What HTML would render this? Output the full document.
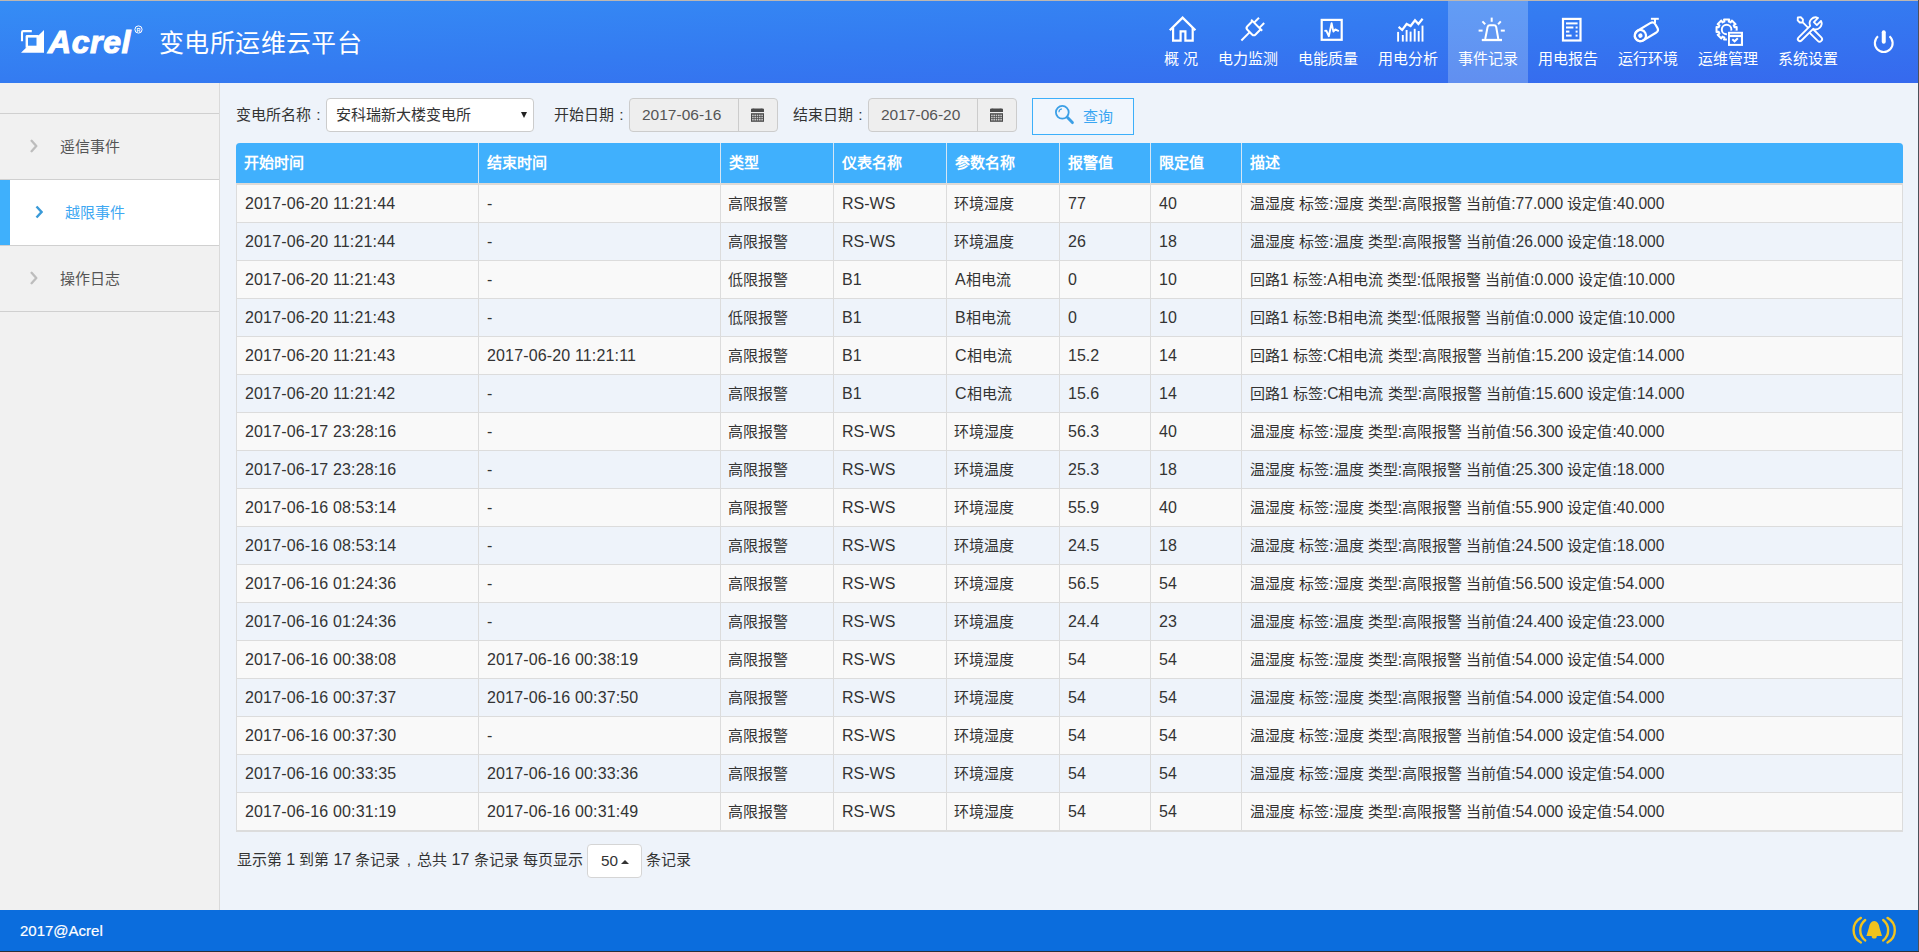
<!DOCTYPE html>
<html lang="zh-CN"><head><meta charset="utf-8">
<style>
*{box-sizing:border-box;margin:0;padding:0}
html,body{width:1919px;height:952px;overflow:hidden;background:#eef3fa;font-family:"Liberation Sans",sans-serif;color:#333;position:relative}
.edge-top{position:absolute;left:0;top:0;width:1919px;height:1px;background:#bdb7b1;z-index:5}
.edge-right{position:absolute;left:1918px;top:0;width:1px;height:952px;background:#4b5058;z-index:5}
.edge-bot{position:absolute;left:0;top:951px;width:1919px;height:1px;background:#2a3038;z-index:5}
#hdr{position:absolute;left:0;top:0;width:1919px;height:83px;background:linear-gradient(to bottom right,#358df5,#347bf1 50%,#3669ee);overflow:hidden}
#acrel{position:absolute;left:48px;top:23px;font:italic bold 32px/38px "Liberation Sans",sans-serif;color:#fff;-webkit-text-stroke:1.1px #fff;letter-spacing:0.6px}
#title{position:absolute;left:159px;top:27px;font-size:25px;letter-spacing:0.4px;color:#fff;line-height:32px}
.ni{position:absolute;top:1px;height:82px;color:#fff;font-size:15px;text-align:center}
.ni span{position:absolute;left:0;right:0;top:48.5px;line-height:18px;white-space:nowrap}
.ni.act{background:linear-gradient(#629df5,#618ff0)}
#side{position:absolute;left:0;top:83px;width:220px;height:827px;background:#f1f1f1;border-right:1px solid #dadada}
.si{position:absolute;left:0;width:219px;height:67px;border-top:1px solid #d0d0d0;border-bottom:1px solid #d0d0d0;font-size:15px;color:#555}
.si .chev{position:absolute;left:30px;top:25px}
.si .t{position:absolute;left:60px;top:23px;line-height:20px}
.si.act{background:#fff;color:#40a8f2}
.si.act .bar{position:absolute;left:0;top:0;width:10px;height:65px;background:#3fb0fc}
.si.act .chev{left:35px}
.si.act .t{left:65px}
.col{display:inline-block;width:15px;text-align:center;font-style:normal;font-size:15.5px}
.lbl{position:absolute;top:105px;font-size:15px;line-height:20px;color:#333}
.sel{position:absolute;left:326px;top:98px;width:208px;height:34px;background:#fff;border:1px solid #ccc;border-radius:4px;font-size:15px}
.sel span{position:absolute;left:9px;top:6px;line-height:20px}
.tri{position:absolute;left:194px;top:13px;width:0;height:0;border-left:3px solid transparent;border-right:3px solid transparent;border-top:6px solid #222}
.dinp{position:absolute;top:98px;width:149px;height:34px;background:#eee;border:1px solid #ccc;border-radius:4px;font-size:15px;color:#555}
.dinp span{position:absolute;left:12px;top:6px;line-height:20px}
.dinp .add{position:absolute;right:0;top:-1px;width:39px;height:34px;border-left:1px solid #ccc}
.btn{position:absolute;left:1032px;top:98px;width:102px;height:37px;border:1.5px solid #3caffa;background:#f1f6fd;color:#3aa6f2;font-size:15px}
.btn span{position:absolute;left:50px;top:8px;line-height:20px}
#tbl{position:absolute;left:236px;top:143px;width:1667px;height:689px;background:#eef3fa;border:1px solid #dcdcdc;border-top:none;border-radius:4px 4px 0 0}
.th{position:absolute;left:-1px;top:0;width:1667px;height:42px;background:#40b0fd;border-radius:4px 4px 0 0;border-bottom:2px solid #dedad6}
.th .c{position:absolute;top:0;height:40px;line-height:40px;padding-left:8px;color:#fff;font-weight:bold;font-size:15px;border-left:1px solid #d5e6f5}
.th .c:first-child{border-left:none}
.tr{position:absolute;left:-1px;width:1666px;height:38px;border-bottom:1px solid #dcdcdc}
.tr.odd{background:#f9f9f9}
.tr .c .L{font-size:16px}
.tr .c.dt .L{letter-spacing:0.15px}
.tr .c.ds .L{font-size:15.6px}
.tr .c{position:absolute;top:0;height:37px;line-height:37px;padding-left:7px;font-size:15px;color:#333;border-left:1px solid #dcdcdc;white-space:nowrap}
#pg{position:absolute;left:237px;top:844px;height:34px;font-size:15px;color:#333}
.L{font-size:15.5px}
#pg .L{font-size:16px}
#pg .psel .L{font-size:15.3px}
.ptxt{position:absolute;left:0;top:6px;line-height:20px;white-space:nowrap}
.psel{position:absolute;left:350px;top:0;width:55px;height:34px;background:#fff;border:1px solid #d5d5d5;border-radius:4px}
.psel span{position:absolute;left:13px;top:5.8px;line-height:20px}
.tri2{position:absolute;left:33px;top:15px;width:0;height:0;border-left:4px solid transparent;border-right:4px solid transparent;border-bottom:4px solid #333}
.ptxt2{position:absolute;left:409px;top:6px;line-height:20px;white-space:nowrap}
#ft{position:absolute;left:0;top:910px;width:1919px;height:42px;background:#0b6ddd;color:#fff;font-size:14px}
#ft .c{position:absolute;left:20px;top:11.5px;line-height:18px;font-size:15px;-webkit-text-stroke:0.2px #fff}
</style></head>
<body>
<div id="hdr">

<svg width="26" height="26" viewBox="0 0 26 26" style="position:absolute;left:20px;top:29px">
 <path d="M2,12.2 L2,3.4 Q2,2.1 3.3,2.1 L11.8,2.1" fill="none" stroke="#fff" stroke-width="2.1"/>
 <path d="M1,23.8 L24,1.1 L24,23.8 Z" fill="#fff"/>
 <path d="M5.6,18.8 L5.6,7.4 Q5.6,6 7,6 L18.6,6 L18.6,18.8 Z" fill="#fff"/>
 <rect x="8" y="8.6" width="8.5" height="8.1" fill="#3589f3"/>
</svg>

<div id="acrel">Acrel</div>
<svg width="10" height="10" viewBox="0 0 10 10" style="position:absolute;left:134px;top:25px"><circle cx="4.5" cy="4.5" r="3.6" fill="none" stroke="#fff" stroke-width="1"/><text x="4.5" y="6.6" font-size="5.5" font-family="Liberation Sans" fill="#fff" text-anchor="middle" font-weight="bold">R</text></svg>
<div id="title">变电所运维云平台</div>
<div class="ni" style="left:1154px;width:54px"><span>概&nbsp;况</span></div>
<div class="ni" style="left:1208px;width:80px"><span>电力监测</span></div>
<div class="ni" style="left:1288px;width:80px"><span>电能质量</span></div>
<div class="ni" style="left:1368px;width:80px"><span>用电分析</span></div>
<div class="ni act" style="left:1448px;width:80px"><span>事件记录</span></div>
<div class="ni" style="left:1528px;width:80px"><span>用电报告</span></div>
<div class="ni" style="left:1608px;width:80px"><span>运行环境</span></div>
<div class="ni" style="left:1688px;width:80px"><span>运维管理</span></div>
<div class="ni" style="left:1768px;width:80px"><span>系统设置</span></div>


<svg id="icons" width="1919" height="83" viewBox="0 0 1919 83" style="position:absolute;left:0;top:0" fill="none" stroke="#fff" stroke-width="2.1">
 <!-- house -->
 <polyline points="1169.8,30.3 1182.6,17.6 1195.4,30.3" stroke-width="2.3"/>
 <polyline points="1173.1,27.4 1173.1,40.6 1180.6,40.6 1180.6,31.4 1185.4,31.4 1185.4,40.6 1192.7,40.6 1192.7,27.4" stroke-width="2.2"/>
 <!-- plug -->
 <g transform="translate(1253.6,28.2) rotate(45)" stroke-width="2">
   <path d="M-5.8,-4.3 L-5.8,3 Q-5.8,5.5 -3.3,5.5 L3.3,5.5 Q5.8,5.5 5.8,3 L5.8,-4.3"/>
   <line x1="-7.8" y1="-4.3" x2="7.8" y2="-4.3"/>
   <line x1="-3.6" y1="-4.3" x2="-3.6" y2="-11.2"/>
   <line x1="3.8" y1="-4.3" x2="3.8" y2="-11.2"/>
   <line x1="0" y1="5.5" x2="0" y2="17.3"/>
 </g>
 <!-- monitor pulse -->
 <rect x="1321.7" y="19.9" width="20" height="19.9" stroke-width="2.2"/>
 <polyline points="1324.4,30.9 1326.3,30.6 1328.8,36.2 1331.6,23.2 1333.4,31.6 1335.3,29.4 1338.8,31.2" stroke-width="1.9" stroke-linejoin="round"/>
 <!-- chart -->
 <g stroke-width="1.9">
  <line x1="1398.1" y1="31.9" x2="1398.1" y2="41.6"/>
  <line x1="1402.8" y1="35" x2="1402.8" y2="41.6"/>
  <line x1="1406.6" y1="30" x2="1406.6" y2="41.6"/>
  <line x1="1410.6" y1="31.6" x2="1410.6" y2="41.6"/>
  <line x1="1414.7" y1="28.8" x2="1414.7" y2="41.6"/>
  <line x1="1418.7" y1="31" x2="1418.7" y2="41.6"/>
  <line x1="1422.5" y1="25.6" x2="1422.5" y2="41.6"/>
 </g>
 <polyline points="1398.6,26.9 1402.2,30 1406.6,24 1410.6,26 1415,20.3 1418.4,24 1422.6,18.8" stroke-width="2.2"/>
 <!-- alarm -->
 <line x1="1481.8" y1="40" x2="1502" y2="40" stroke-width="2.3"/>
 <path d="M1485.2,39 L1487.6,27 Q1488,25.3 1489.8,25.3 L1494,25.3 Q1495.8,25.3 1496.2,27 L1498.3,39" stroke-width="2"/>
 <line x1="1491.7" y1="17.6" x2="1491.7" y2="21.8" stroke-width="2"/>
 <line x1="1482.4" y1="21.4" x2="1485.2" y2="24.2" stroke-width="2"/>
 <line x1="1500.8" y1="21.4" x2="1498.1" y2="24.2" stroke-width="2"/>
 <line x1="1478.6" y1="30.6" x2="1482.6" y2="30.6" stroke-width="2"/>
 <line x1="1500.8" y1="30.6" x2="1504.8" y2="30.6" stroke-width="2"/>
 <!-- report -->
 <rect x="1563" y="18.9" width="17.5" height="21.6" stroke-width="2.2"/>
 <g stroke-width="2">
  <line x1="1566" y1="23.4" x2="1577.6" y2="23.4"/>
  <line x1="1566" y1="27.5" x2="1573.4" y2="27.5"/>
  <line x1="1575.6" y1="27.5" x2="1577.6" y2="27.5"/>
  <line x1="1566" y1="31.6" x2="1569.4" y2="31.6"/>
  <line x1="1575.6" y1="31.6" x2="1577.6" y2="31.6"/>
  <line x1="1566" y1="35.6" x2="1571.6" y2="35.6"/>
  <line x1="1575.6" y1="35.6" x2="1577.6" y2="35.6"/>
 </g>
 <!-- camera -->
 <line x1="1650.9" y1="18.8" x2="1658.8" y2="18.8" stroke-width="2"/>
 <line x1="1655" y1="18.8" x2="1655" y2="23" stroke-width="2"/>
 <g transform="translate(1640.4,35.6) rotate(-31)" stroke-width="2.1">
   <path d="M0,-5.6 L14.8,-5.6 Q18.6,-5.6 18.6,-1.8 L18.6,1.8 Q18.6,5.6 14.8,5.6 L0,5.6 A5.6,5.6 0 0 1 0,-5.6 Z" stroke-width="2.2"/>
   <circle cx="0" cy="0" r="5.6" stroke-width="2.2"/>
   <circle cx="0" cy="0" r="2.2" fill="#fff" stroke="none"/>
 </g>
 <!-- gear + calendar -->
 <path d="M1724.44,21.59 L1724.01,19.43 L1729.19,19.43 L1728.76,21.59 A8.20,8.20 0 0 1 1730.66,22.38 L1731.89,20.55 L1735.55,24.21 L1733.72,25.44 A8.20,8.20 0 0 1 1734.51,27.34 L1736.67,26.91 L1736.67,32.09 L1734.51,31.66 A8.20,8.20 0 0 1 1733.72,33.56 L1735.55,34.79 L1731.89,38.45 L1730.66,36.62 A8.20,8.20 0 0 1 1728.76,37.41 L1729.19,39.57 L1724.01,39.57 L1724.44,37.41 A8.20,8.20 0 0 1 1722.54,36.62 L1721.31,38.45 L1717.65,34.79 L1719.48,33.56 A8.20,8.20 0 0 1 1718.69,31.66 L1716.53,32.09 L1716.53,26.91 L1718.69,27.34 A8.20,8.20 0 0 1 1719.48,25.44 L1717.65,24.21 L1721.31,20.55 L1722.54,22.38 A8.20,8.20 0 0 1 1724.44,21.59 Z" stroke-width="2" stroke-linejoin="round"/>
 <circle cx="1726.6" cy="29.5" r="4.8" stroke-width="1.9"/>
 <rect x="1726.9" y="30.6" width="17.5" height="16.5" fill="#3474ee" stroke="none"/>
 <rect x="1728" y="31.8" width="15" height="14.1" fill="#fff" stroke="none"/>
 <rect x="1729.9" y="37.1" width="11" height="6.8" fill="#3474ee" stroke="none"/>
 <rect x="1729.9" y="33.7" width="11" height="1.1" fill="#3474ee" stroke="none"/>
 <polyline points="1732.3,39.3 1734.6,41.3 1737.8,38.2" stroke-width="2"/>
 <!-- tools -->
 <g transform="translate(1810,29) rotate(-45)" stroke-width="1.85" stroke-linejoin="round">
   <path d="M2.4,-2.1 L-14.2,-2.1 A2.1,2.1 0 0 0 -14.2,2.1 L2.4,2.1 A5.9,5.9 0 0 0 13.5,2.1 L7.6,2.1 L7.6,-2.1 L13.5,-2.1 A5.9,5.9 0 0 0 2.4,-2.1 Z"/>
   <path d="M-0.4,-2.1 L-0.4,-9.8 M-0.4,-9.8 L-2.6,-11.8 L-2.6,-14.8 L-0.4,-16.8 L1.8,-14.8 L1.8,-11.8 Z"/>
   <path d="M-2.9,2.1 L-2.9,13.9 A2.5,2.5 0 0 0 2.1,13.9 L2.1,2.1"/>
 </g>
 <!-- power -->
 <path d="M1878.0,36.3 A8.9,8.9 0 1 0 1889.5,36.3" stroke-width="2.1"/>
 <line x1="1883.75" y1="32.2" x2="1883.75" y2="41.8" stroke-width="4" stroke-linecap="round"/>
</svg>

</div>
<div id="side">
<div class="si" style="top:30px"><svg class="chev" width="8" height="14" viewBox="0 0 8 14"><polyline points="1.6,1.8 6.3,7 1.6,12.2" fill="none" stroke="#bdbdbd" stroke-width="2.3" stroke-linecap="round" stroke-linejoin="round"/></svg><div class="t">遥信事件</div></div>
<div class="si act" style="top:96px"><div class="bar"></div><svg class="chev" width="8" height="14" viewBox="0 0 8 14"><polyline points="1.5,1.5 6.5,7 1.5,12.5" fill="none" stroke="#3a9ad8" stroke-width="2.4"/></svg><div class="t">越限事件</div></div>
<div class="si" style="top:162px"><svg class="chev" width="8" height="14" viewBox="0 0 8 14"><polyline points="1.6,1.8 6.3,7 1.6,12.2" fill="none" stroke="#bdbdbd" stroke-width="2.3" stroke-linecap="round" stroke-linejoin="round"/></svg><div class="t">操作日志</div></div>
</div>

<svg width="1919" height="40" viewBox="0 95 1919 40" style="position:absolute;left:0;top:95px;z-index:3" fill="none" stroke="#3b9fe6"><circle cx="1062.3" cy="112.3" r="6.4" stroke-width="1.8"/><line x1="1067.3" y1="117.3" x2="1072.4" y2="122.6" stroke-width="2.9" stroke-linecap="round"/><path d="M1058.9,112.2 A3.5,3.5 0 0 1 1061.9,108.9" stroke-width="1.1"/></svg>
<div class="lbl" style="left:236px">变电所名称<i class="col">:</i></div>
<div class="sel"><span>安科瑞新大楼变电所</span><i class="tri"></i></div>
<div class="lbl" style="left:554px">开始日期<i class="col">:</i></div>
<div class="dinp" style="left:629px"><span class="L">2017-06-16</span><div class="add"><svg width="14" height="14" viewBox="0 0 14 14" style="position:absolute;left:12px;top:10px">
<path d="M0,4 L0,1.6 Q0,0.4 1.2,0.4 L2.2,0.4 Q2.8,0 3.4,0.4 L9.6,0.4 Q10.2,0 10.8,0.4 L11.8,0.4 Q13,0.4 13,1.6 L13,4 Z" fill="#4a4a4a"/>
<rect x="0" y="5.2" width="13" height="8.6" fill="#4a4a4a"/>
<g fill="#c8c8c8"><rect x="1.1" y="6.6" width="1.6" height="1.5"/><rect x="3.4" y="6.6" width="1.6" height="1.5"/><rect x="5.7" y="6.6" width="1.6" height="1.5"/><rect x="8.0" y="6.6" width="1.6" height="1.5"/><rect x="10.3" y="6.6" width="1.6" height="1.5"/><rect x="1.1" y="8.8" width="1.6" height="1.5"/><rect x="3.4" y="8.8" width="1.6" height="1.5"/><rect x="5.7" y="8.8" width="1.6" height="1.5"/><rect x="8.0" y="8.8" width="1.6" height="1.5"/><rect x="10.3" y="8.8" width="1.6" height="1.5"/><rect x="1.1" y="11.0" width="1.6" height="1.5"/><rect x="3.4" y="11.0" width="1.6" height="1.5"/><rect x="5.7" y="11.0" width="1.6" height="1.5"/><rect x="8.0" y="11.0" width="1.6" height="1.5"/><rect x="10.3" y="11.0" width="1.6" height="1.5"/></g></svg></div></div>
<div class="lbl" style="left:793px">结束日期<i class="col">:</i></div>
<div class="dinp" style="left:868px"><span class="L">2017-06-20</span><div class="add"><svg width="14" height="14" viewBox="0 0 14 14" style="position:absolute;left:12px;top:10px">
<path d="M0,4 L0,1.6 Q0,0.4 1.2,0.4 L2.2,0.4 Q2.8,0 3.4,0.4 L9.6,0.4 Q10.2,0 10.8,0.4 L11.8,0.4 Q13,0.4 13,1.6 L13,4 Z" fill="#4a4a4a"/>
<rect x="0" y="5.2" width="13" height="8.6" fill="#4a4a4a"/>
<g fill="#c8c8c8"><rect x="1.1" y="6.6" width="1.6" height="1.5"/><rect x="3.4" y="6.6" width="1.6" height="1.5"/><rect x="5.7" y="6.6" width="1.6" height="1.5"/><rect x="8.0" y="6.6" width="1.6" height="1.5"/><rect x="10.3" y="6.6" width="1.6" height="1.5"/><rect x="1.1" y="8.8" width="1.6" height="1.5"/><rect x="3.4" y="8.8" width="1.6" height="1.5"/><rect x="5.7" y="8.8" width="1.6" height="1.5"/><rect x="8.0" y="8.8" width="1.6" height="1.5"/><rect x="10.3" y="8.8" width="1.6" height="1.5"/><rect x="1.1" y="11.0" width="1.6" height="1.5"/><rect x="3.4" y="11.0" width="1.6" height="1.5"/><rect x="5.7" y="11.0" width="1.6" height="1.5"/><rect x="8.0" y="11.0" width="1.6" height="1.5"/><rect x="10.3" y="11.0" width="1.6" height="1.5"/></g></svg></div></div>
<div class="btn"><span>查询</span></div>

<div id="tbl"><div class="th"><div class="c" style="left:0px;width:242px">开始时间</div><div class="c" style="left:242px;width:242px">结束时间</div><div class="c" style="left:484px;width:113px">类型</div><div class="c" style="left:597px;width:113px">仪表名称</div><div class="c" style="left:710px;width:113px">参数名称</div><div class="c" style="left:823px;width:91px">报警值</div><div class="c" style="left:914px;width:91px">限定值</div><div class="c" style="left:1005px;width:661px">描述</div></div><div class="tr odd" style="top:42px"><div class="c dt" style="left:0px;width:242px;padding-left:8px"><span class="L">2017-06-20 11:21:44</span></div><div class="c dt" style="left:242px;width:242px;padding-left:8px"><span class="L">-</span></div><div class="c" style="left:484px;width:113px;padding-left:7px">高限报警</div><div class="c" style="left:597px;width:113px;padding-left:8px"><span class="L">RS-WS</span></div><div class="c" style="left:710px;width:113px;padding-left:7px">环境湿度</div><div class="c" style="left:823px;width:91px;padding-left:8px"><span class="L">77</span></div><div class="c" style="left:914px;width:91px;padding-left:8px"><span class="L">40</span></div><div class="c ds" style="left:1005px;width:661px;padding-left:8px">温湿度 标签<span class="L">:</span>湿度 类型<span class="L">:</span>高限报警 当前值<span class="L">:77.000</span> 设定值<span class="L">:40.000</span></div></div><div class="tr" style="top:80px"><div class="c dt" style="left:0px;width:242px;padding-left:8px"><span class="L">2017-06-20 11:21:44</span></div><div class="c dt" style="left:242px;width:242px;padding-left:8px"><span class="L">-</span></div><div class="c" style="left:484px;width:113px;padding-left:7px">高限报警</div><div class="c" style="left:597px;width:113px;padding-left:8px"><span class="L">RS-WS</span></div><div class="c" style="left:710px;width:113px;padding-left:7px">环境温度</div><div class="c" style="left:823px;width:91px;padding-left:8px"><span class="L">26</span></div><div class="c" style="left:914px;width:91px;padding-left:8px"><span class="L">18</span></div><div class="c ds" style="left:1005px;width:661px;padding-left:8px">温湿度 标签<span class="L">:</span>温度 类型<span class="L">:</span>高限报警 当前值<span class="L">:26.000</span> 设定值<span class="L">:18.000</span></div></div><div class="tr odd" style="top:118px"><div class="c dt" style="left:0px;width:242px;padding-left:8px"><span class="L">2017-06-20 11:21:43</span></div><div class="c dt" style="left:242px;width:242px;padding-left:8px"><span class="L">-</span></div><div class="c" style="left:484px;width:113px;padding-left:7px">低限报警</div><div class="c" style="left:597px;width:113px;padding-left:8px"><span class="L">B1</span></div><div class="c" style="left:710px;width:113px;padding-left:8px"><span class="L">A</span>相电流</div><div class="c" style="left:823px;width:91px;padding-left:8px"><span class="L">0</span></div><div class="c" style="left:914px;width:91px;padding-left:8px"><span class="L">10</span></div><div class="c ds" style="left:1005px;width:661px;padding-left:8px">回路<span class="L">1</span> 标签<span class="L">:A</span>相电流 类型<span class="L">:</span>低限报警 当前值<span class="L">:0.000</span> 设定值<span class="L">:10.000</span></div></div><div class="tr" style="top:156px"><div class="c dt" style="left:0px;width:242px;padding-left:8px"><span class="L">2017-06-20 11:21:43</span></div><div class="c dt" style="left:242px;width:242px;padding-left:8px"><span class="L">-</span></div><div class="c" style="left:484px;width:113px;padding-left:7px">低限报警</div><div class="c" style="left:597px;width:113px;padding-left:8px"><span class="L">B1</span></div><div class="c" style="left:710px;width:113px;padding-left:8px"><span class="L">B</span>相电流</div><div class="c" style="left:823px;width:91px;padding-left:8px"><span class="L">0</span></div><div class="c" style="left:914px;width:91px;padding-left:8px"><span class="L">10</span></div><div class="c ds" style="left:1005px;width:661px;padding-left:8px">回路<span class="L">1</span> 标签<span class="L">:B</span>相电流 类型<span class="L">:</span>低限报警 当前值<span class="L">:0.000</span> 设定值<span class="L">:10.000</span></div></div><div class="tr odd" style="top:194px"><div class="c dt" style="left:0px;width:242px;padding-left:8px"><span class="L">2017-06-20 11:21:43</span></div><div class="c dt" style="left:242px;width:242px;padding-left:8px"><span class="L">2017-06-20 11:21:11</span></div><div class="c" style="left:484px;width:113px;padding-left:7px">高限报警</div><div class="c" style="left:597px;width:113px;padding-left:8px"><span class="L">B1</span></div><div class="c" style="left:710px;width:113px;padding-left:8px"><span class="L">C</span>相电流</div><div class="c" style="left:823px;width:91px;padding-left:8px"><span class="L">15.2</span></div><div class="c" style="left:914px;width:91px;padding-left:8px"><span class="L">14</span></div><div class="c ds" style="left:1005px;width:661px;padding-left:8px">回路<span class="L">1</span> 标签<span class="L">:C</span>相电流 类型<span class="L">:</span>高限报警 当前值<span class="L">:15.200</span> 设定值<span class="L">:14.000</span></div></div><div class="tr" style="top:232px"><div class="c dt" style="left:0px;width:242px;padding-left:8px"><span class="L">2017-06-20 11:21:42</span></div><div class="c dt" style="left:242px;width:242px;padding-left:8px"><span class="L">-</span></div><div class="c" style="left:484px;width:113px;padding-left:7px">高限报警</div><div class="c" style="left:597px;width:113px;padding-left:8px"><span class="L">B1</span></div><div class="c" style="left:710px;width:113px;padding-left:8px"><span class="L">C</span>相电流</div><div class="c" style="left:823px;width:91px;padding-left:8px"><span class="L">15.6</span></div><div class="c" style="left:914px;width:91px;padding-left:8px"><span class="L">14</span></div><div class="c ds" style="left:1005px;width:661px;padding-left:8px">回路<span class="L">1</span> 标签<span class="L">:C</span>相电流 类型<span class="L">:</span>高限报警 当前值<span class="L">:15.600</span> 设定值<span class="L">:14.000</span></div></div><div class="tr odd" style="top:270px"><div class="c dt" style="left:0px;width:242px;padding-left:8px"><span class="L">2017-06-17 23:28:16</span></div><div class="c dt" style="left:242px;width:242px;padding-left:8px"><span class="L">-</span></div><div class="c" style="left:484px;width:113px;padding-left:7px">高限报警</div><div class="c" style="left:597px;width:113px;padding-left:8px"><span class="L">RS-WS</span></div><div class="c" style="left:710px;width:113px;padding-left:7px">环境湿度</div><div class="c" style="left:823px;width:91px;padding-left:8px"><span class="L">56.3</span></div><div class="c" style="left:914px;width:91px;padding-left:8px"><span class="L">40</span></div><div class="c ds" style="left:1005px;width:661px;padding-left:8px">温湿度 标签<span class="L">:</span>湿度 类型<span class="L">:</span>高限报警 当前值<span class="L">:56.300</span> 设定值<span class="L">:40.000</span></div></div><div class="tr" style="top:308px"><div class="c dt" style="left:0px;width:242px;padding-left:8px"><span class="L">2017-06-17 23:28:16</span></div><div class="c dt" style="left:242px;width:242px;padding-left:8px"><span class="L">-</span></div><div class="c" style="left:484px;width:113px;padding-left:7px">高限报警</div><div class="c" style="left:597px;width:113px;padding-left:8px"><span class="L">RS-WS</span></div><div class="c" style="left:710px;width:113px;padding-left:7px">环境温度</div><div class="c" style="left:823px;width:91px;padding-left:8px"><span class="L">25.3</span></div><div class="c" style="left:914px;width:91px;padding-left:8px"><span class="L">18</span></div><div class="c ds" style="left:1005px;width:661px;padding-left:8px">温湿度 标签<span class="L">:</span>温度 类型<span class="L">:</span>高限报警 当前值<span class="L">:25.300</span> 设定值<span class="L">:18.000</span></div></div><div class="tr odd" style="top:346px"><div class="c dt" style="left:0px;width:242px;padding-left:8px"><span class="L">2017-06-16 08:53:14</span></div><div class="c dt" style="left:242px;width:242px;padding-left:8px"><span class="L">-</span></div><div class="c" style="left:484px;width:113px;padding-left:7px">高限报警</div><div class="c" style="left:597px;width:113px;padding-left:8px"><span class="L">RS-WS</span></div><div class="c" style="left:710px;width:113px;padding-left:7px">环境湿度</div><div class="c" style="left:823px;width:91px;padding-left:8px"><span class="L">55.9</span></div><div class="c" style="left:914px;width:91px;padding-left:8px"><span class="L">40</span></div><div class="c ds" style="left:1005px;width:661px;padding-left:8px">温湿度 标签<span class="L">:</span>湿度 类型<span class="L">:</span>高限报警 当前值<span class="L">:55.900</span> 设定值<span class="L">:40.000</span></div></div><div class="tr" style="top:384px"><div class="c dt" style="left:0px;width:242px;padding-left:8px"><span class="L">2017-06-16 08:53:14</span></div><div class="c dt" style="left:242px;width:242px;padding-left:8px"><span class="L">-</span></div><div class="c" style="left:484px;width:113px;padding-left:7px">高限报警</div><div class="c" style="left:597px;width:113px;padding-left:8px"><span class="L">RS-WS</span></div><div class="c" style="left:710px;width:113px;padding-left:7px">环境温度</div><div class="c" style="left:823px;width:91px;padding-left:8px"><span class="L">24.5</span></div><div class="c" style="left:914px;width:91px;padding-left:8px"><span class="L">18</span></div><div class="c ds" style="left:1005px;width:661px;padding-left:8px">温湿度 标签<span class="L">:</span>温度 类型<span class="L">:</span>高限报警 当前值<span class="L">:24.500</span> 设定值<span class="L">:18.000</span></div></div><div class="tr odd" style="top:422px"><div class="c dt" style="left:0px;width:242px;padding-left:8px"><span class="L">2017-06-16 01:24:36</span></div><div class="c dt" style="left:242px;width:242px;padding-left:8px"><span class="L">-</span></div><div class="c" style="left:484px;width:113px;padding-left:7px">高限报警</div><div class="c" style="left:597px;width:113px;padding-left:8px"><span class="L">RS-WS</span></div><div class="c" style="left:710px;width:113px;padding-left:7px">环境湿度</div><div class="c" style="left:823px;width:91px;padding-left:8px"><span class="L">56.5</span></div><div class="c" style="left:914px;width:91px;padding-left:8px"><span class="L">54</span></div><div class="c ds" style="left:1005px;width:661px;padding-left:8px">温湿度 标签<span class="L">:</span>湿度 类型<span class="L">:</span>高限报警 当前值<span class="L">:56.500</span> 设定值<span class="L">:54.000</span></div></div><div class="tr" style="top:460px"><div class="c dt" style="left:0px;width:242px;padding-left:8px"><span class="L">2017-06-16 01:24:36</span></div><div class="c dt" style="left:242px;width:242px;padding-left:8px"><span class="L">-</span></div><div class="c" style="left:484px;width:113px;padding-left:7px">高限报警</div><div class="c" style="left:597px;width:113px;padding-left:8px"><span class="L">RS-WS</span></div><div class="c" style="left:710px;width:113px;padding-left:7px">环境温度</div><div class="c" style="left:823px;width:91px;padding-left:8px"><span class="L">24.4</span></div><div class="c" style="left:914px;width:91px;padding-left:8px"><span class="L">23</span></div><div class="c ds" style="left:1005px;width:661px;padding-left:8px">温湿度 标签<span class="L">:</span>温度 类型<span class="L">:</span>高限报警 当前值<span class="L">:24.400</span> 设定值<span class="L">:23.000</span></div></div><div class="tr odd" style="top:498px"><div class="c dt" style="left:0px;width:242px;padding-left:8px"><span class="L">2017-06-16 00:38:08</span></div><div class="c dt" style="left:242px;width:242px;padding-left:8px"><span class="L">2017-06-16 00:38:19</span></div><div class="c" style="left:484px;width:113px;padding-left:7px">高限报警</div><div class="c" style="left:597px;width:113px;padding-left:8px"><span class="L">RS-WS</span></div><div class="c" style="left:710px;width:113px;padding-left:7px">环境湿度</div><div class="c" style="left:823px;width:91px;padding-left:8px"><span class="L">54</span></div><div class="c" style="left:914px;width:91px;padding-left:8px"><span class="L">54</span></div><div class="c ds" style="left:1005px;width:661px;padding-left:8px">温湿度 标签<span class="L">:</span>湿度 类型<span class="L">:</span>高限报警 当前值<span class="L">:54.000</span> 设定值<span class="L">:54.000</span></div></div><div class="tr" style="top:536px"><div class="c dt" style="left:0px;width:242px;padding-left:8px"><span class="L">2017-06-16 00:37:37</span></div><div class="c dt" style="left:242px;width:242px;padding-left:8px"><span class="L">2017-06-16 00:37:50</span></div><div class="c" style="left:484px;width:113px;padding-left:7px">高限报警</div><div class="c" style="left:597px;width:113px;padding-left:8px"><span class="L">RS-WS</span></div><div class="c" style="left:710px;width:113px;padding-left:7px">环境湿度</div><div class="c" style="left:823px;width:91px;padding-left:8px"><span class="L">54</span></div><div class="c" style="left:914px;width:91px;padding-left:8px"><span class="L">54</span></div><div class="c ds" style="left:1005px;width:661px;padding-left:8px">温湿度 标签<span class="L">:</span>湿度 类型<span class="L">:</span>高限报警 当前值<span class="L">:54.000</span> 设定值<span class="L">:54.000</span></div></div><div class="tr odd" style="top:574px"><div class="c dt" style="left:0px;width:242px;padding-left:8px"><span class="L">2017-06-16 00:37:30</span></div><div class="c dt" style="left:242px;width:242px;padding-left:8px"><span class="L">-</span></div><div class="c" style="left:484px;width:113px;padding-left:7px">高限报警</div><div class="c" style="left:597px;width:113px;padding-left:8px"><span class="L">RS-WS</span></div><div class="c" style="left:710px;width:113px;padding-left:7px">环境湿度</div><div class="c" style="left:823px;width:91px;padding-left:8px"><span class="L">54</span></div><div class="c" style="left:914px;width:91px;padding-left:8px"><span class="L">54</span></div><div class="c ds" style="left:1005px;width:661px;padding-left:8px">温湿度 标签<span class="L">:</span>湿度 类型<span class="L">:</span>高限报警 当前值<span class="L">:54.000</span> 设定值<span class="L">:54.000</span></div></div><div class="tr" style="top:612px"><div class="c dt" style="left:0px;width:242px;padding-left:8px"><span class="L">2017-06-16 00:33:35</span></div><div class="c dt" style="left:242px;width:242px;padding-left:8px"><span class="L">2017-06-16 00:33:36</span></div><div class="c" style="left:484px;width:113px;padding-left:7px">高限报警</div><div class="c" style="left:597px;width:113px;padding-left:8px"><span class="L">RS-WS</span></div><div class="c" style="left:710px;width:113px;padding-left:7px">环境湿度</div><div class="c" style="left:823px;width:91px;padding-left:8px"><span class="L">54</span></div><div class="c" style="left:914px;width:91px;padding-left:8px"><span class="L">54</span></div><div class="c ds" style="left:1005px;width:661px;padding-left:8px">温湿度 标签<span class="L">:</span>湿度 类型<span class="L">:</span>高限报警 当前值<span class="L">:54.000</span> 设定值<span class="L">:54.000</span></div></div><div class="tr odd" style="top:650px"><div class="c dt" style="left:0px;width:242px;padding-left:8px"><span class="L">2017-06-16 00:31:19</span></div><div class="c dt" style="left:242px;width:242px;padding-left:8px"><span class="L">2017-06-16 00:31:49</span></div><div class="c" style="left:484px;width:113px;padding-left:7px">高限报警</div><div class="c" style="left:597px;width:113px;padding-left:8px"><span class="L">RS-WS</span></div><div class="c" style="left:710px;width:113px;padding-left:7px">环境湿度</div><div class="c" style="left:823px;width:91px;padding-left:8px"><span class="L">54</span></div><div class="c" style="left:914px;width:91px;padding-left:8px"><span class="L">54</span></div><div class="c ds" style="left:1005px;width:661px;padding-left:8px">温湿度 标签<span class="L">:</span>湿度 类型<span class="L">:</span>高限报警 当前值<span class="L">:54.000</span> 设定值<span class="L">:54.000</span></div></div></div>

<div id="pg"><span class="ptxt">显示第 <span class="L">1</span> 到第 <span class="L">17</span> 条记录<i class="col" style="width:17px">,</i>总共 <span class="L">17</span> 条记录 每页显示</span><div class="psel"><span class="L">50</span><i class="tri2"></i></div><span class="ptxt2">条记录</span></div>

<div id="ft"><div class="c">2017@Acrel</div><svg width="1919" height="42" viewBox="0 910 1919 42" style="position:absolute;left:0;top:0" fill="none" stroke="#f1c31e" stroke-width="2.4" stroke-linecap="round">
<path d="M1860.9,917.9 A14,14 0 0 0 1860.9,942.5"/>
<path d="M1865.2,920.0 A13,13 0 0 0 1865.2,940.4"/>
<path d="M1887.5,917.9 A14,14 0 0 1 1887.5,942.5"/>
<path d="M1883.2,920.0 A13,13 0 0 1 1883.2,940.4"/>
<path d="M1866.4,935.9 L1868.7,928.5 Q1869.7,921.0 1874.2,921.0 Q1878.7,921.0 1879.7,928.5 L1882.0,935.9 Z" fill="#f1c31e" stroke="none"/>
<path d="M1871.6,936 A2.6,2.6 0 0 0 1876.8,936 Z" fill="#f1c31e" stroke="none"/>
</svg></div>
<div class="edge-top"></div><div class="edge-right"></div><div class="edge-bot"></div>
</body></html>
